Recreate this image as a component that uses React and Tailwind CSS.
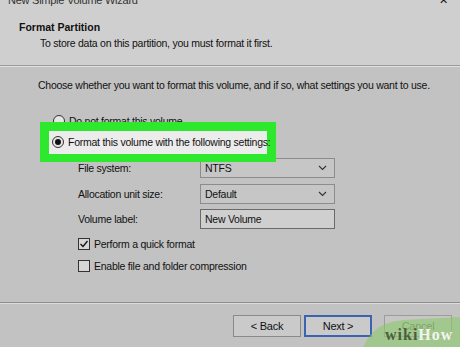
import React from 'react';

const Radio = ({ checked }) => (
  <span className="w-[12px] h-[12px] rounded-full border border-[#333] bg-[#e6e6e6] flex items-center justify-center shrink-0">
    {checked && <span className="w-[6px] h-[6px] rounded-full bg-[#111]" />}
  </span>
);

const Checkbox = ({ checked }) => (
  <span className="w-[12px] h-[12px] border border-[#333] bg-[#d6d6d6] flex items-center justify-center shrink-0">
    {checked && (
      <svg width="10" height="10" viewBox="0 0 10 10">
        <path d="M1.5 5 L4 7.5 L8.5 2" fill="none" stroke="#111" strokeWidth="1.3" />
      </svg>
    )}
  </span>
);

const Chevron = () => (
  <svg width="9" height="6" viewBox="0 0 9 6">
    <path d="M1 1 L4.5 4.5 L8 1" fill="none" stroke="#333" strokeWidth="1.1" />
  </svg>
);

const Field = ({ label, value, select, className }) => (
  <div className={`flex items-center h-[20px] ${className}`}>
    <span className="w-[122px]">{label}</span>
    <div
      className={`w-[135px] h-[20px] border flex items-center justify-between pl-[4px] pr-[7px] ${
        select ? 'bg-[#c6c6c6] border-[#8c8c8c]' : 'bg-[#cfcfcf] border-[#6a6a6a]'
      }`}
    >
      <span>{value}</span>
      {select && <Chevron />}
    </div>
  </div>
);

const App = () => {
  return (
    <div
      className="relative w-[460px] h-[347px] overflow-hidden bg-[#c2c2c2] text-[10.5px] tracking-[-0.25px] text-[#111] leading-[12px]"
      style={{ fontFamily: '"Liberation Sans", Arial, sans-serif' }}
    >
      <div className="h-[66px] bg-[#cfcfcf] border-b border-[#9a9a9a]">
        <div className="flex justify-between items-end h-[6px] pl-[8px] pr-[12px] overflow-hidden">
          <span className="text-[11px] leading-[12px] text-[#333]">New Simple Volume Wizard</span>
          <span className="text-[11px] leading-[12px]">✕</span>
        </div>
        <div className="pl-[19px] pt-[15px] font-bold text-[10.5px] tracking-[0px]">Format Partition</div>
        <div className="pl-[40px] pt-[4px]">To store data on this partition, you must format it first.</div>
      </div>
      <div className="h-[1px] bg-[#e0e0e0]" />

      <div className="pl-[38px] pt-[12px]">
        <div>Choose whether you want to format this volume, and if so, what settings you want to use.</div>

        <div className="flex items-center gap-[4px] mt-[24px] pl-[15px]">
          <Radio />
          <span>Do not format this volume</span>
        </div>

        <div className="relative z-10 w-[236px] h-[40px] bg-[#2de82d] ml-[2px] -mt-[5px] flex items-center px-[9px]">
          <div className="flex items-center gap-[4px] bg-[#ececec] h-[23px] w-full pl-[3px] whitespace-nowrap">
            <Radio checked />
            <span>Format this volume with the following settings:</span>
          </div>
        </div>

        <div className="pl-[40px]">
          <Field label="File system:" value="NTFS" select className="-mt-[4px]" />
          <Field label="Allocation unit size:" value="Default" select className="mt-[6px]" />
          <Field label="Volume label:" value="New Volume" className="mt-[5px]" />
          <div className="flex items-center gap-[4px] mt-[9px]">
            <Checkbox checked />
            <span>Perform a quick format</span>
          </div>
          <div className="flex items-center gap-[4px] mt-[10px]">
            <Checkbox />
            <span>Enable file and folder compression</span>
          </div>
        </div>
      </div>

      <div className="absolute left-0 right-0 top-[302px] h-[1px] bg-[#8e8e8e]" />
      <div className="absolute left-0 right-0 top-[303px] h-[1px] bg-[#dcdcdc]" />

      <div className="absolute left-[233px] top-[315px] flex gap-[3px] text-[11px]">
        <div className="w-[68px] h-[22px] bg-[#cacaca] border border-[#8a8a8a] flex items-center justify-center">&lt; Back</div>
        <div className="w-[68px] h-[22px] bg-[#cacaca] border-2 border-[#3a63b0] flex items-center justify-center">Next &gt;</div>
        <div className="w-[68px] h-[22px] bg-[#c6c6c6] border border-[#9c9c9c] flex items-center justify-center ml-[9px] text-[#6a6a6a]">Cancel</div>
      </div>

      <div className="absolute right-0 bottom-0 w-[97px] h-[30px]">
        <svg className="absolute inset-0" width="97" height="30" viewBox="0 0 97 30">
          <path d="M0 30 Q8 13 22 7 Q30 4 40 3 L97 0 L97 30 Z" fill="#8cc96a" opacity="0.6" />
        </svg>
        <div
          className="absolute left-[22px] top-[10px] text-[16px] leading-[16px] font-bold tracking-[1px] whitespace-nowrap"
          style={{ fontFamily: '"Liberation Serif", serif' }}
        >
          <span className="text-[#4b5f3c]">wiki</span>
          <span className="text-[#f2f5ee]">How</span>
        </div>
      </div>
    </div>
  );
};

export default App;
